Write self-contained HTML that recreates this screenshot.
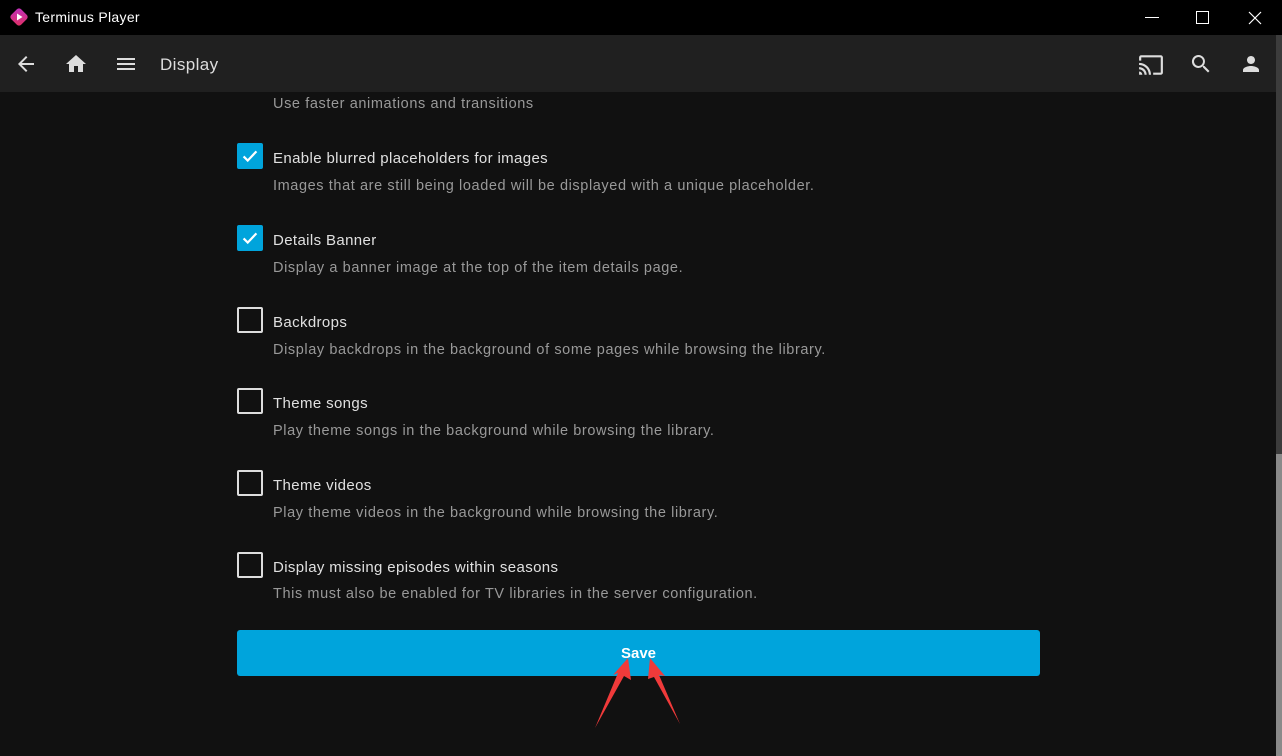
<!DOCTYPE html>
<html><head><style>
*{margin:0;padding:0;box-sizing:border-box}
body{width:1282px;height:756px;background:#111;font-family:"Liberation Sans",sans-serif;position:relative;overflow:hidden;color:#ddd}
.tb{position:absolute;left:0;top:0;width:1282px;height:35px;background:#000}
.tb .t{position:absolute;left:35px;top:9px;font-size:14px;color:#fff;letter-spacing:.3px}
.hd{position:absolute;left:0;top:35px;width:1276px;height:57px;background:#202020}
.sb1{position:absolute;left:1276px;top:35px;width:6px;height:419px;background:#3c3c3c}
.sb2{position:absolute;left:1276px;top:454px;width:6px;height:302px;background:#8a8a8a}
.cb{position:absolute;left:237px;width:26px;height:26px;border:2px solid #ddd;border-radius:2px}
.cb.on{background:#00a4dc;border-color:#00a4dc}
.lb{position:absolute;left:273px;font-size:15px;color:#e0e0e0;letter-spacing:.37px}
.ds{position:absolute;left:273px;font-size:14.5px;color:#999;letter-spacing:.6px}
.save{position:absolute;left:237px;top:630px;width:803px;height:46px;background:#00a4dc;border-radius:3px;color:#fff;font-weight:bold;font-size:15px;text-align:center;line-height:48px}
</style></head><body>
<div class="tb">
<svg style="position:absolute;left:9px;top:7px" width="20" height="20" viewBox="0 0 20 20"><defs><linearGradient id="g" x1="0" y1="0" x2="1" y2="1"><stop offset="0" stop-color="#c030c0"/><stop offset="1" stop-color="#e03060"/></linearGradient></defs><rect x="3" y="3" width="14" height="14" rx="3" transform="rotate(45 10 10)" fill="url(#g)"/><path d="M8 6.5L13.5 10L8 13.5Z" fill="#fff"/></svg>
<div class="t">Terminus Player</div>
<svg style="position:absolute;left:1145px;top:17px" width="14" height="2"><rect width="14" height="1" fill="#fff"/></svg>
<svg style="position:absolute;left:1196px;top:11px" width="13" height="13"><rect x=".5" y=".5" width="12" height="12" fill="none" stroke="#fff"/></svg>
<svg style="position:absolute;left:1248px;top:11px" width="14" height="14"><path d="M1 1L13 13M13 1L1 13" stroke="#fff" stroke-width="1.2"/></svg>
</div>
<div class="hd">
<svg style="position:absolute;left:14px;top:17px" width="24" height="24" viewBox="0 0 24 24"><path d="M20 11H7.8l5.6-5.6L12 4l-8 8 8 8 1.4-1.4L7.8 13H20z" fill="#ddd"/></svg>
<svg style="position:absolute;left:64px;top:17px" width="24" height="24" viewBox="0 0 24 24"><path d="M10 20v-6h4v6h5v-8h3L12 3 2 12h3v8z" fill="#ddd"/></svg>
<svg style="position:absolute;left:114px;top:17px" width="24" height="24" viewBox="0 0 24 24"><path d="M3 18h18v-2H3zm0-5h18v-2H3zm0-7v2h18V6z" fill="#ddd"/></svg>
<div style="position:absolute;left:160px;top:20px;font-size:17px;color:#ddd;letter-spacing:.4px">Display</div>
<svg style="position:absolute;left:1138px;top:17px" width="26" height="26" viewBox="0 0 24 24"><path d="M21 3H3c-1.1 0-2 .9-2 2v3h2V5h18v14h-7v2h7c1.1 0 2-.9 2-2V5c0-1.1-.9-2-2-2zM1 18v3h3c0-1.66-1.34-3-3-3zm0-4v2c2.76 0 5 2.24 5 5h2c0-3.87-3.13-7-7-7zm0-4v2c4.97 0 9 4.03 9 9h2c0-6.08-4.93-11-11-11z" fill="#ddd"/></svg>
<svg style="position:absolute;left:1189px;top:17px" width="24" height="24" viewBox="0 0 24 24"><path d="M15.5 14h-.8l-.3-.3A6.5 6.5 0 1 0 9.5 16a6.5 6.5 0 0 0 4.2-1.6l.3.3v.8l5 5 1.5-1.5zm-6 0a4.5 4.5 0 1 1 0-9 4.5 4.5 0 0 1 0 9z" fill="#ddd"/></svg>
<svg style="position:absolute;left:1239px;top:17px" width="24" height="24" viewBox="0 0 24 24"><path d="M12 12c2.2 0 4-1.8 4-4s-1.8-4-4-4-4 1.8-4 4 1.8 4 4 4zm0 2c-2.7 0-8 1.3-8 4v2h16v-2c0-2.7-5.3-4-8-4z" fill="#ddd"/></svg>
</div>
<div class="sb1"></div><div class="sb2"></div>
<div class="ds" style="top:96px">Use faster animations and transitions</div>

<div class="cb on" style="top:143px"><svg width="22" height="22" viewBox="0 0 24 24"><path d="M5 12.5l4.5 4.5L19 7" stroke="#fff" stroke-width="2.4" fill="none"/></svg></div>
<div class="lb" style="top:150px">Enable blurred placeholders for images</div>
<div class="ds" style="top:178px">Images that are still being loaded will be displayed with a unique placeholder.</div>

<div class="cb on" style="top:225px"><svg width="22" height="22" viewBox="0 0 24 24"><path d="M5 12.5l4.5 4.5L19 7" stroke="#fff" stroke-width="2.4" fill="none"/></svg></div>
<div class="lb" style="top:232px">Details Banner</div>
<div class="ds" style="top:260px">Display a banner image at the top of the item details page.</div>

<div class="cb" style="top:307px"></div>
<div class="lb" style="top:314px">Backdrops</div>
<div class="ds" style="top:342px">Display backdrops in the background of some pages while browsing the library.</div>

<div class="cb" style="top:388px"></div>
<div class="lb" style="top:395px">Theme songs</div>
<div class="ds" style="top:423px">Play theme songs in the background while browsing the library.</div>

<div class="cb" style="top:470px"></div>
<div class="lb" style="top:477px">Theme videos</div>
<div class="ds" style="top:505px">Play theme videos in the background while browsing the library.</div>

<div class="cb" style="top:552px"></div>
<div class="lb" style="top:559px">Display missing episodes within seasons</div>
<div class="ds" style="top:586px">This must also be enabled for TV libraries in the server configuration.</div>

<div class="save">Save</div>
<svg style="position:absolute;left:0;top:0" width="1282" height="756"><polygon points="628,658 631,680 624,676 595,728 618,673 613,675" fill="#f03a3a"/><polygon points="650,658 665,676 659,675 680,724 654,677 648,679" fill="#f03a3a"/></svg>
</body></html>
